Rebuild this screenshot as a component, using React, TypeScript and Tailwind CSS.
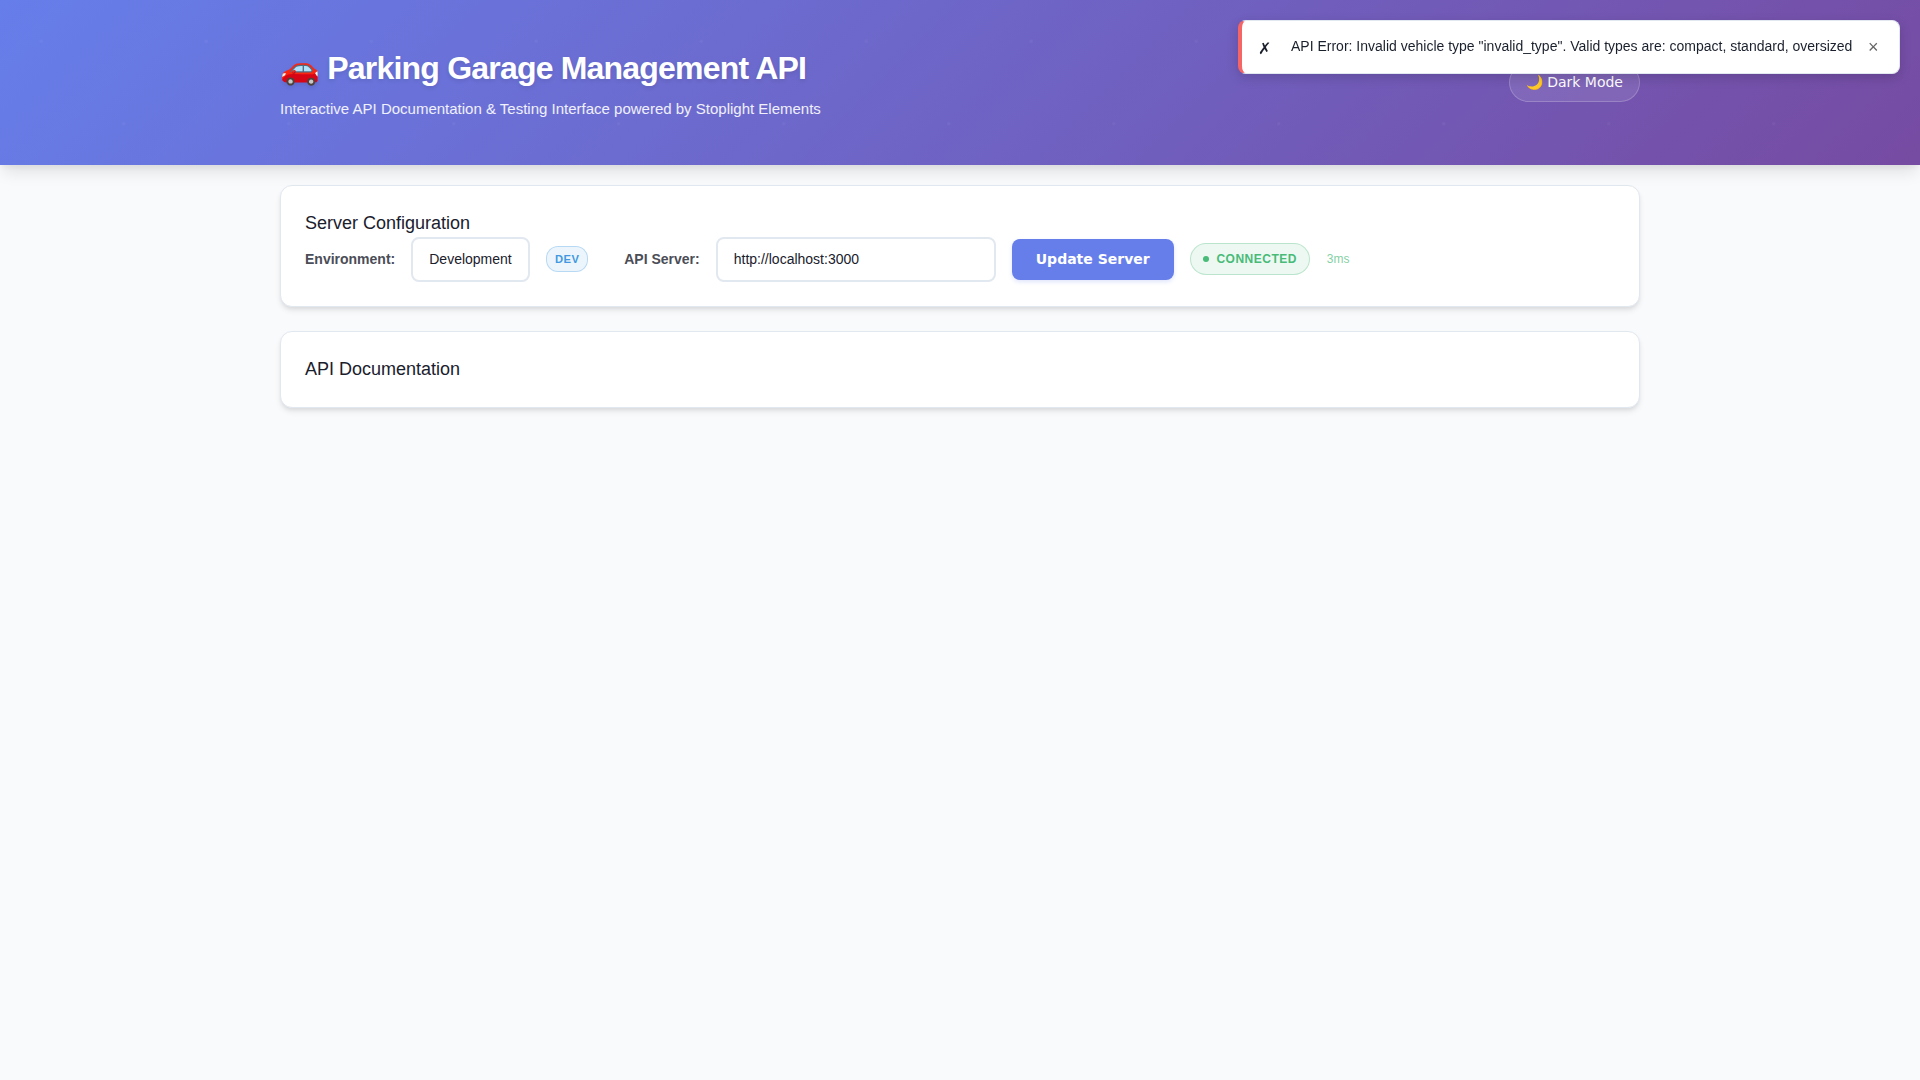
const sections = {
  card: "rounded-xl border border-[#e2e8f0] bg-white p-6 shadow-[0_4px_6px_-1px_rgba(0,0,0,0.1),0_2px_4px_-1px_rgba(0,0,0,0.06)]",
  title: "text-[18px] leading-[26px] text-[#1a202c]",
  field: "flex h-[45px] items-center rounded-lg border-2 border-[#e2e8f0] bg-white px-4 pb-0.5 text-sm text-[#1a202c]",
  label: "mb-0.5 font-semibold text-[#4b4d57]",
};

function DotPattern() {
  return (
    <svg className="absolute inset-0 h-full w-full" aria-hidden="true">
      <defs>
        <pattern id="dots" width="165" height="165" patternUnits="userSpaceOnUse">
          <circle cx="41.25" cy="41.25" r="1.65" fill="white" opacity="0.04" />
          <circle cx="123.75" cy="123.75" r="1.65" fill="white" opacity="0.04" />
        </pattern>
      </defs>
      <rect width="100%" height="100%" fill="url(#dots)" />
    </svg>
  );
}

function Header() {
  return (
    <header className="relative h-[165px] bg-[linear-gradient(135deg,#667eea_0%,#764ba2_100%)] shadow-[0_10px_15px_-3px_rgba(0,0,0,0.1),0_4px_6px_-2px_rgba(0,0,0,0.05)]">
      <DotPattern />
      <div className="relative mx-auto flex h-full w-[1360px] items-center justify-between">
        <div className="pb-0.5">
          <h1 className="text-[32px] leading-[51px] font-bold tracking-[-0.8px] text-white [text-shadow:0_2px_4px_rgba(0,0,0,0.1)]">
            🚗 Parking Garage Management API
          </h1>
          <p className="mt-[3px] text-[15px] leading-6 text-white/90">
            Interactive API Documentation &amp; Testing Interface powered by Stoplight Elements
          </p>
        </div>
        <button className="flex h-[39px] items-center rounded-full border border-white/20 bg-white/10 px-4 pb-px font-['DejaVu_Sans',sans-serif] text-sm text-white">
          🌙 Dark Mode
        </button>
      </div>
    </header>
  );
}

function Toast() {
  return (
    <div className="fixed top-5 right-5 flex h-[54px] w-[662px] items-center rounded-lg border border-l-4 border-[#e2e8f0] border-l-[#f56565] bg-white pl-4 text-[#1a202c] shadow-[0_4px_12px_rgba(0,0,0,0.15)]">
      <span className="w-[33px] pt-1 text-base">✗</span>
      <span className="pb-0.5 text-sm whitespace-nowrap">
        API Error: Invalid vehicle type "invalid_type". Valid types are: compact, standard, oversized
      </span>
      <button className="ml-[15.5px] text-lg text-[#666666]">×</button>
    </div>
  );
}

export default function App() {
  return (
    <div className="min-h-screen bg-[#f8fafc] font-['Liberation_Sans',sans-serif]">
      <Header />
      <main className="mx-auto flex w-[1360px] flex-col gap-6 pt-5">
        <section className={`${sections.card} h-[122px]`}>
          <h2 className={sections.title}>Server Configuration</h2>
          <div className="mt-px flex items-center text-sm">
            <label className={sections.label}>Environment:</label>
            <div className={`${sections.field} ml-4 w-[119px]`}>Development</div>
            <span className="mb-px ml-4 flex h-[26px] w-[42px] items-center justify-center rounded-xl border border-[#4299e1]/30 bg-[#4299e1]/10 text-[11.2px] font-semibold tracking-[0.5px] text-[#4299e1]">
              DEV
            </span>
            <label className={`${sections.label} ml-9`}>API Server:</label>
            <div className={`${sections.field} ml-4 w-[280px]`}>http://localhost:3000</div>
            <button className="ml-4 h-[41px] w-[162px] rounded-lg bg-[#667eea] pb-0.5 font-['DejaVu_Sans',sans-serif] text-sm font-semibold text-white shadow-[0_2px_4px_rgba(102,126,234,0.2)]">
              Update Server
            </button>
            <span className="mb-px ml-4 flex h-8 w-[120px] items-center justify-center gap-[7px] rounded-full border border-[#48bb78]/30 bg-[#48bb78]/10 pl-px text-xs font-semibold tracking-[0.5px] text-[#48bb78]">
              <i className="h-1.5 w-1.5 rounded-full bg-[#48bb78]" />
              CONNECTED
            </span>
            <span className="mb-0.5 ml-[17px] text-xs text-[#48bb78]/70">3ms</span>
          </div>
        </section>
        <section className={`${sections.card} h-[77px]`}>
          <h2 className={sections.title}>API Documentation</h2>
        </section>
      </main>
      <Toast />
    </div>
  );
}
